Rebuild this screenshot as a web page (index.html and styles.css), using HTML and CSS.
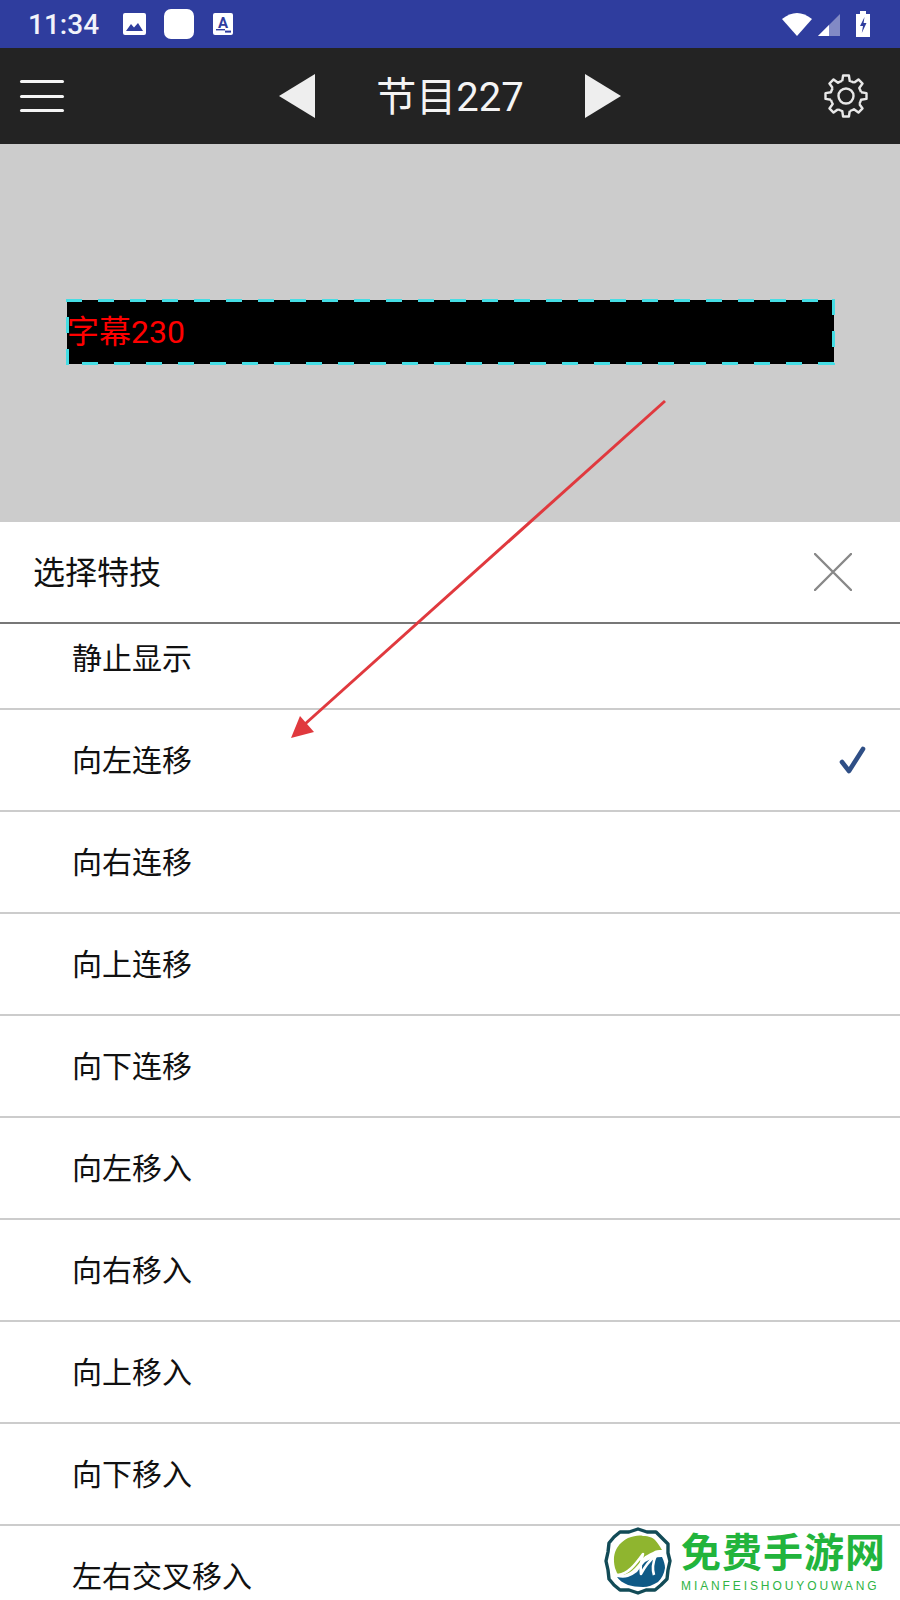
FILE: index.html
```html
<!DOCTYPE html>
<html lang="en">
<head>
  <meta charset="UTF-8">
  <title>节目227</title>
  <link rel="stylesheet" href="styles.css">
</head>
<body>

  <div class="status-bar">
    <div class="status-left">
      <span class="clock">11:34</span>
      <svg class="icon-picture" viewBox="0 0 23 22">
        <rect width="23" height="22" rx="2" fill="#fff"/>
        <path d="M3 18 L8 11 L11 14.5 L15 10 L20 18 Z" fill="#2f3d9e"/>
      </svg>
      <span class="app-square"></span>
      <svg class="icon-font" viewBox="0 0 20 22">
        <rect width="20" height="22" rx="2" fill="#fff"/>
        <text x="10" y="14.5" text-anchor="middle" class="icon-font-letter">A</text>
        <rect x="3" y="16" width="9" height="1.4" fill="#2f3d9e"/>
        <rect x="12" y="17.6" width="6" height="2" fill="#2f3d9e"/>
      </svg>
    </div>
    <div class="status-right">
      <svg class="icon-wifi" viewBox="0 0 30 24">
        <path d="M0 7 Q15 -5 30 7 L15 24 Z" fill="#fff"/>
      </svg>
      <svg class="icon-signal" viewBox="0 0 22 22">
        <path d="M22 0 V22 H0 Z" fill="#fff" fill-opacity="0.4"/>
        <path d="M11 11 V22 H0 Z" fill="#fff"/>
      </svg>
      <svg class="icon-battery" viewBox="0 0 14 26">
        <path d="M4 0 H10 V3 H14 V26 H0 V3 H4 Z" fill="#fff"/>
        <path d="M8.5 6 L4 15 H7 L5.8 22 L10.5 12 H7.6 Z" fill="#2f3d9e"/>
      </svg>
    </div>
  </div>

  <div class="toolbar">
    <div class="menu-btn">
      <span></span>
      <span></span>
      <span></span>
    </div>
    <div class="program-nav">
      <span class="arrow-left"></span>
      <span class="program-title">节目227</span>
      <span class="arrow-right"></span>
    </div>
    <svg class="gear" viewBox="0 0 44 44">
      <g fill="none" stroke="#e8e8e8" stroke-width="2.4" stroke-linejoin="round">
        <path id="tooth" d="M18.25 6.96 L19.08 1.5 H24.92 L25.75 6.96 A15.5 15.5 0 0 1 29.98 8.71"/>
        <use href="#tooth" transform="rotate(45 22 22)"/>
        <use href="#tooth" transform="rotate(90 22 22)"/>
        <use href="#tooth" transform="rotate(135 22 22)"/>
        <use href="#tooth" transform="rotate(180 22 22)"/>
        <use href="#tooth" transform="rotate(225 22 22)"/>
        <use href="#tooth" transform="rotate(270 22 22)"/>
        <use href="#tooth" transform="rotate(315 22 22)"/>
        <circle cx="22" cy="22" r="7.5"/>
      </g>
    </svg>
  </div>

  <div class="preview">
    <div class="caption-box">字幕230</div>
  </div>

  <div class="sheet">
    <div class="sheet-header">
      <span class="sheet-title">选择特技</span>
      <svg class="close-btn" viewBox="0 0 38 38">
        <path d="M1 1 L37 37 M37 1 L1 37" stroke="#888888" stroke-width="2.4" stroke-linecap="round"/>
      </svg>
    </div>
    <ul class="effect-list">
      <li class="effect-row first-row">静止显示</li>
      <li class="effect-row">向左连移
        <svg class="check" viewBox="0 0 28 28">
          <path d="M4 16 L11 25 L25 3" fill="none" stroke="#2f4f86" stroke-width="4.6" stroke-linecap="round" stroke-linejoin="round"/>
        </svg>
      </li>
      <li class="effect-row">向右连移</li>
      <li class="effect-row">向上连移</li>
      <li class="effect-row">向下连移</li>
      <li class="effect-row">向左移入</li>
      <li class="effect-row">向右移入</li>
      <li class="effect-row">向上移入</li>
      <li class="effect-row">向下移入</li>
      <li class="effect-row">左右交叉移入</li>
    </ul>
  </div>

  <!-- red annotation arrow over the page -->
  <svg class="annotation" viewBox="0 0 900 1600">
    <path d="M665 401 L305 724" stroke="#e0393e" stroke-width="3" fill="none"/>
    <path d="M291 738 L300 716 L314 732 Z" fill="#e0393e"/>
  </svg>

  <!-- watermark -->
  <div class="watermark">
    <svg class="watermark-logo" viewBox="0 0 68 68">
      <path d="M34 2 L43 5 L52 5 L58 11 L64 17 L64 26 L66 34 L64 43 L63 52 L57 58 L51 63 L42 63 L34 66 L25 63 L16 63 L10 58 L5 52 L4 43 L2 34 L4 25 L5 16 L10 10 L16 5 L25 5 Z" fill="#fff" stroke="#124b57" stroke-width="3.4" stroke-linejoin="round"/>
      <path d="M11 41 C9 32 10 26 13 21 C16 16 20 13 24 11 C30 9 35 8 39 9 C45 9 49 11 51 13 C54 16 56 20 58 23 C54 23 52 23 49 25 C45 27 42 28 39 31 C36 35 34 38 31 41 C27 45 23 47 19 48 C16 48 14 47 13 46 Z" fill="#8fb52f"/>
      <path d="M58 30 C60 34 61 38 61 41 C60 47 58 51 54 55 C49 58 44 60 39 60 C33 60 28 59 24 58 C19 56 15 53 13 50 C17 51 21 51 24 50 C27 49 30 47 33 45 C36 41 38 38 41 35 C46 32 52 30 58 30 Z" fill="#0f5a86"/>
      <path d="M14 48 C24 47 31 38 39 27 C37 34 36 40 37 47 C40 41 45 34 52 28 C49 35 48 42 50 48" fill="none" stroke="#fff" stroke-width="2.6" stroke-linejoin="round"/>
    </svg>
    <div class="watermark-text">
      <span class="watermark-name">免费手游网</span>
      <span class="watermark-pinyin">MIANFEISHOUYOUWANG</span>
    </div>
  </div>

</body>
</html>
```

FILE: styles.css
```css
* {
  box-sizing: border-box;
}

html, body {
  margin: 0;
  padding: 0;
}

body {
  position: relative;
  width: 900px;
  height: 1600px;
  overflow: hidden;
  background: #fff;
  font-family: "Noto Sans CJK SC", "Noto Sans", sans-serif;
  color: #111;
}

/* status bar */
.status-bar {
  height: 48px;
  background: #2f3d9e;
  display: flex;
  justify-content: space-between;
  align-items: center;
  padding: 0 30px 0 28px;
}

.status-left, .status-right {
  display: flex;
  align-items: center;
}

.clock {
  font-family: Roboto, sans-serif;
  font-weight: 500;
  font-size: 28px;
  color: #f2f3fa;
  width: 95px;
}

.icon-picture {
  width: 23px;
  height: 22px;
}

.app-square {
  width: 30px;
  height: 30px;
  margin-left: 18px;
  background: #fff;
  border-radius: 7px;
}

.icon-font {
  width: 20px;
  height: 22px;
  margin-left: 19px;
}

.icon-font-letter {
  font-family: Roboto, sans-serif;
  font-weight: 700;
  font-size: 15px;
  fill: #2f3d9e;
}

.icon-wifi {
  width: 30px;
  height: 24px;
}

.icon-signal {
  width: 22px;
  height: 22px;
  margin-left: 6px;
  margin-top: 2px;
}

.icon-battery {
  width: 14px;
  height: 26px;
  margin-left: 16px;
}

/* toolbar */
.toolbar {
  height: 96px;
  background: #232323;
  display: grid;
  grid-template-columns: 1fr auto 1fr;
  align-items: center;
  padding: 0 32px;
}

.menu-btn {
  width: 44px;
  margin-left: -12px;
  display: flex;
  flex-direction: column;
  gap: 11.5px;
}

.menu-btn span {
  display: block;
  height: 3px;
  background: #f4f4f4;
  border-radius: 2px;
}

.program-nav {
  display: flex;
  align-items: center;
  gap: 61px;
}

.arrow-left, .arrow-right {
  width: 0;
  height: 0;
  border-top: 22px solid transparent;
  border-bottom: 22px solid transparent;
}

.arrow-left {
  border-right: 36px solid #eeeeee;
}

.arrow-right {
  border-left: 36px solid #eeeeee;
}

.program-title {
  font-family: Roboto, "Noto Sans CJK SC", sans-serif;
  font-size: 40px;
  line-height: 1;
  padding-top: 3px;
  color: #f4f4f4;
}

.gear {
  width: 44px;
  height: 44px;
  justify-self: end;
}

/* preview area */
.preview {
  height: 378px;
  background: #cccccc;
  padding: 155px 65px 0 66px;
}

/* marching ants round the caption, black starts 1px inside */
.caption-box {
  height: 66px;
  display: flex;
  align-items: center;
  padding: 0 0 6px 1px;
  font-family: Roboto, "Noto Sans CJK SC", sans-serif;
  font-size: 32px;
  color: #ff0000;
  background-image:
    repeating-linear-gradient(90deg, #45dde4 0 16px, transparent 16px 32px),
    repeating-linear-gradient(90deg, transparent 0 16px, #45dde4 16px 32px),
    repeating-linear-gradient(0deg, #45dde4 0 16px, transparent 16px 32px),
    repeating-linear-gradient(180deg, #45dde4 0 16px, transparent 16px 32px),
    linear-gradient(#000, #000);
  background-size: 100% 3px, 100% 3px, 3px 100%, 3px 100%, calc(100% - 2px) calc(100% - 2px);
  background-position: 0 0, 0 100%, 0 0, 100% 0, center;
  background-repeat: no-repeat;
}

/* bottom sheet */
.sheet-header {
  height: 102px;
  border-bottom: 2px solid #777;
  display: flex;
  justify-content: space-between;
  align-items: center;
  padding: 0 48px 0 33px;
}

.sheet-title {
  font-size: 32px;
  padding-bottom: 4px;
}

.close-btn {
  width: 38px;
  height: 38px;
}

.effect-list {
  list-style: none;
  margin: 0;
  padding: 0;
}

.effect-row {
  height: 102px;
  padding: 0 34px 4px 72px;
  border-bottom: 2px solid #cccccc;
  font-size: 30px;
  display: flex;
  align-items: center;
  justify-content: space-between;
}

/* list is scrolled a bit so the first row is cut */
.first-row {
  height: 86px;
  padding-bottom: 21px;
}

.check {
  width: 28px;
  height: 28px;
  margin-top: 4px;
}

/* overlays */
.annotation {
  position: absolute;
  left: 0;
  top: 0;
  width: 900px;
  height: 1600px;
  pointer-events: none;
}

.watermark {
  position: absolute;
  left: 604px;
  top: 1527px;
  display: flex;
  gap: 9px;
}

.watermark-logo {
  width: 68px;
  height: 68px;
}

.watermark-text {
  display: flex;
  flex-direction: column;
  margin-top: 3px;
}

.watermark-name {
  font-size: 40px;
  line-height: 40px;
  letter-spacing: 1px;
  font-weight: 700;
  color: #22b43c;
}

.watermark-pinyin {
  margin-top: 9px;
  font-family: "Liberation Sans", sans-serif;
  font-size: 12px;
  line-height: 14px;
  letter-spacing: 2.9px;
  color: #2fb344;
}
```
